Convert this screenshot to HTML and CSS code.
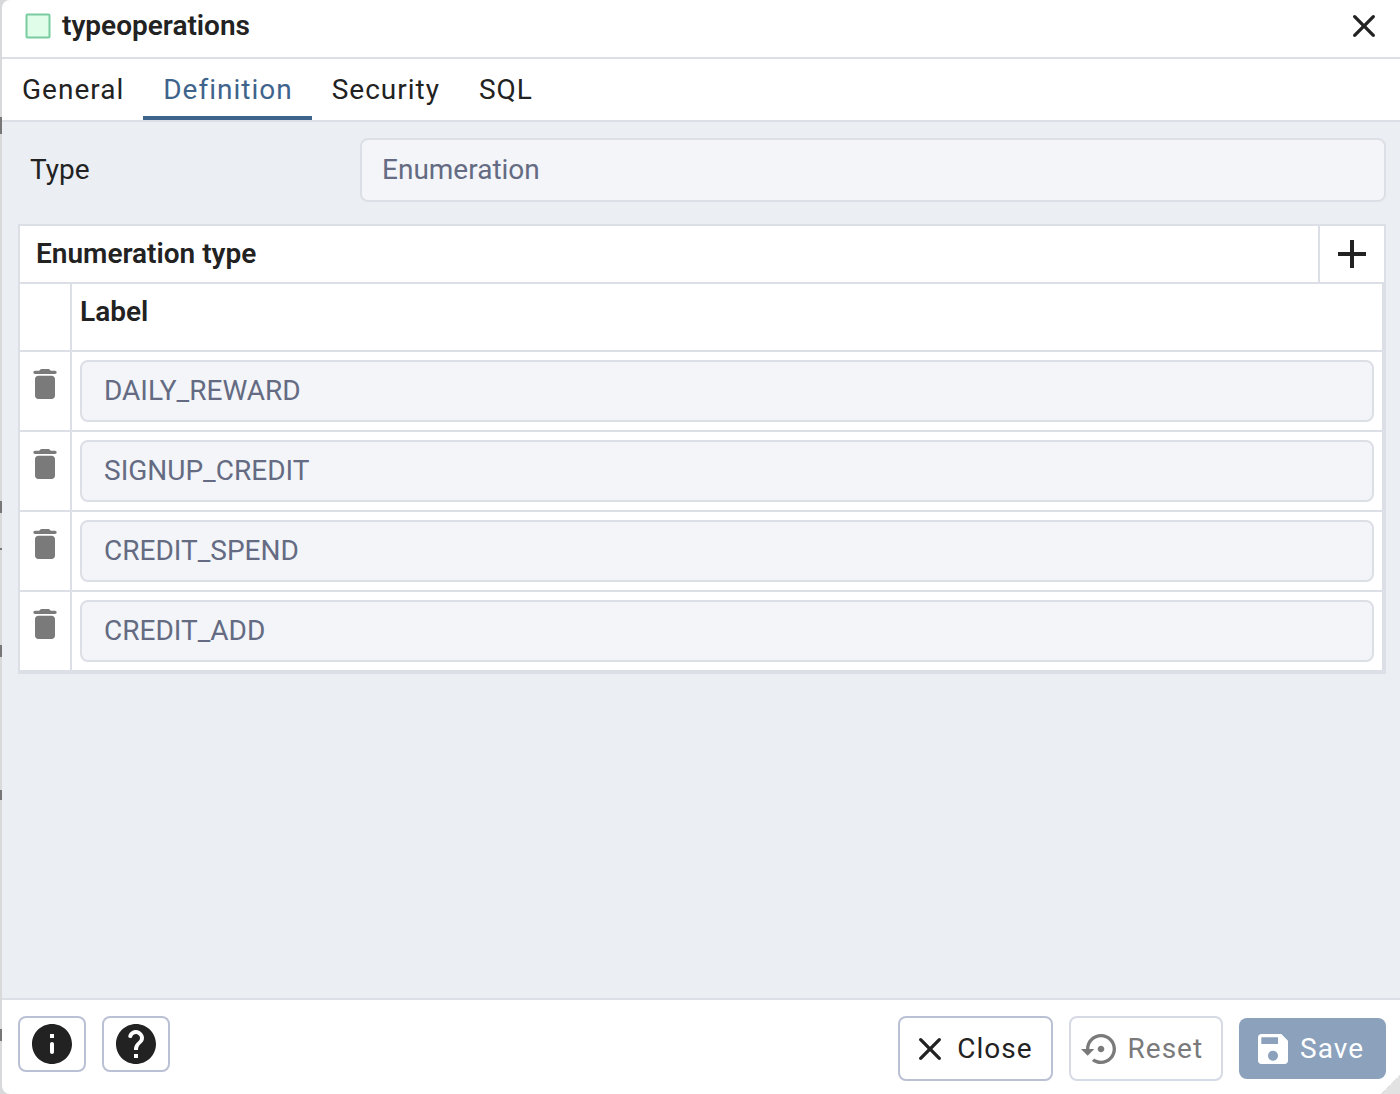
FILE: index.html
```html
<!DOCTYPE html>
<html lang="en">
<head>
<meta charset="utf-8">
<meta name="viewport" content="width=device-width, initial-scale=1">
<title>typeoperations</title>
<link rel="stylesheet" href="styles.css">
</head>
<body>
<svg class="sprite" aria-hidden="true">
  <symbol id="close" viewBox="0 0 24 24"><path d="M18.3 5.71a.9959.9959 0 0 0-1.41 0L12 10.59 7.11 5.7a.9959.9959 0 0 0-1.41 0c-.39.39-.39 1.02 0 1.41L10.59 12 5.7 16.89c-.39.39-.39 1.02 0 1.41.39.39 1.02.39 1.41 0L12 13.41l4.89 4.89c.39.39 1.02.39 1.41 0 .39-.39.39-1.02 0-1.41L13.41 12l4.89-4.89c.38-.38.38-1.02 0-1.4z"/></symbol>
  <symbol id="trash" viewBox="0 0 24 24"><path d="M6 19c0 1.1.9 2 2 2h8c1.1 0 2-.9 2-2V9c0-1.1-.9-2-2-2H8c-1.1 0-2 .9-2 2v10zM18 4h-2.5l-.71-.71c-.18-.18-.44-.29-.7-.29H9.91c-.26 0-.52.11-.7.29L8.5 4H6c-.55 0-1 .45-1 1s.45 1 1 1h12c.55 0 1-.45 1-1s-.45-1-1-1z"/></symbol>
</svg>
<main class="dialog">
  <header class="title-bar">
    <svg class="type-icon" viewBox="0 0 26 26" aria-hidden="true"><rect x="1.5" y="1.5" width="23" height="23" rx="1" fill="#dffde9" stroke="#79cc9f" stroke-width="2"/></svg>
    <h1 class="title">typeoperations</h1>
    <button class="title-close" type="button" aria-label="Close dialog"><svg class="icon"><use href="#close"/></svg></button>
  </header>
  <nav class="tabs" role="tablist">
    <button class="tab" type="button" role="tab" aria-selected="false">General</button>
    <button class="tab tab-active" type="button" role="tab" aria-selected="true">Definition</button>
    <button class="tab" type="button" role="tab" aria-selected="false">Security</button>
    <button class="tab" type="button" role="tab" aria-selected="false">SQL</button>
  </nav>
  <section class="content">
    <div class="field">
      <label class="field-label" for="type">Type</label>
      <input class="input type-input" id="type" value="Enumeration" disabled>
    </div>
    <div class="grid">
      <div class="grid-head">
        <h2 class="grid-title">Enumeration type</h2>
        <button class="add" type="button" aria-label="Add row"><svg class="icon icon-large" viewBox="0 0 24 24"><path d="M19 13h-6v6h-2v-6H5v-2h6V5h2v6h6v2z"/></svg></button>
      </div>
      <table class="table">
        <thead>
          <tr><td class="cell-action"></td><th class="cell-head" scope="col">Label</th></tr>
        </thead>
        <tbody>
          <tr><td class="cell-action"><button class="delete" type="button" aria-label="Delete row" disabled><svg class="icon"><use href="#trash"/></svg></button></td><td class="cell"><input class="input" aria-label="Label" value="DAILY_REWARD" disabled></td></tr>
          <tr><td class="cell-action"><button class="delete" type="button" aria-label="Delete row" disabled><svg class="icon"><use href="#trash"/></svg></button></td><td class="cell"><input class="input" aria-label="Label" value="SIGNUP_CREDIT" disabled></td></tr>
          <tr><td class="cell-action"><button class="delete" type="button" aria-label="Delete row" disabled><svg class="icon"><use href="#trash"/></svg></button></td><td class="cell"><input class="input" aria-label="Label" value="CREDIT_SPEND" disabled></td></tr>
          <tr><td class="cell-action"><button class="delete" type="button" aria-label="Delete row" disabled><svg class="icon"><use href="#trash"/></svg></button></td><td class="cell"><input class="input" aria-label="Label" value="CREDIT_ADD" disabled></td></tr>
        </tbody>
      </table>
    </div>
  </section>
  <footer class="footer">
    <div class="group">
      <button class="button button-icon" type="button" aria-label="Information"><svg class="icon icon-large" viewBox="0 0 24 24"><path d="M12 2C6.48 2 2 6.48 2 12s4.48 10 10 10 10-4.48 10-10S17.52 2 12 2zm0 15c-.55 0-1-.45-1-1v-4c0-.55.45-1 1-1s1 .45 1 1v4c0 .55-.45 1-1 1zm1-8h-2V7h2v2z"/></svg></button>
      <button class="button button-icon" type="button" aria-label="Help"><svg class="icon icon-large" viewBox="0 0 24 24"><path d="M12 2C6.48 2 2 6.48 2 12s4.48 10 10 10 10-4.48 10-10S17.52 2 12 2zm1 17h-2v-2h2v2zm2.07-7.75l-.9.92c-.5.51-.86.97-1.04 1.69-.08.32-.13.68-.13 1.14h-2v-.5c0-.46.08-.9.22-1.31.2-.58.53-1.1.95-1.52l1.24-1.26c.46-.44.68-1.1.55-1.8-.13-.72-.69-1.33-1.39-1.53-1.11-.31-2.14.32-2.47 1.27-.12.37-.43.65-.82.65h-.3C8.4 9 8 8.44 8.16 7.88c.43-1.47 1.68-2.59 3.23-2.83 1.52-.24 2.97.55 3.87 1.8 1.18 1.63.83 3.38-.19 4.4z"/></svg></button>
    </div>
    <div class="group group-actions">
      <button class="button" type="button"><svg class="icon"><use href="#close"/></svg>Close</button>
      <button class="button button-reset" type="button" disabled><svg class="icon" viewBox="0 0 24 24"><path d="M14 12c0-1.1-.9-2-2-2s-2 .9-2 2 .9 2 2 2 2-.9 2-2zm-2-9c-4.97 0-9 4.03-9 9H0l4 4 4-4H5c0-3.87 3.13-7 7-7s7 3.13 7 7-3.13 7-7 7c-1.51 0-2.91-.49-4.06-1.3l-1.42 1.44C8.04 20.3 9.94 21 12 21c4.97 0 9-4.03 9-9s-4.03-9-9-9z"/></svg>Reset</button>
      <button class="button button-save" type="button" disabled><svg class="icon" viewBox="0 0 24 24"><path d="M17 3H5c-1.11 0-2 .9-2 2v14c0 1.1.89 2 2 2h14c1.1 0 2-.9 2-2V7l-4-4zm-5 16c-1.66 0-3-1.34-3-3s1.34-3 3-3 3 1.34 3 3-1.34 3-3 3zm3-10H5V5h10v4z"/></svg>Save</button>
    </div>
  </footer>
  <span class="resize-grip" aria-hidden="true"></span>
</main>
</body>
</html>
```

FILE: styles.css
```css
:root {
  --line: #dddfe6;
  --text: #222222;
  --muted: #646b82;
  --primary: #3f648c;
}

* {
  box-sizing: border-box;
}

body {
  margin: 0;
  padding-left: 2px;
  /* the sliver of the page behind the dialog, with the edges of its text */
  background:
    linear-gradient(#777, #777) 0 117px / 2px 17px no-repeat,
    linear-gradient(#777, #777) 0 501px / 2px 12px no-repeat,
    linear-gradient(#777, #777) 0 548px / 2px 2px no-repeat,
    linear-gradient(#777, #777) 0 645px / 2px 12px no-repeat,
    linear-gradient(#777, #777) 0 790px / 2px 10px no-repeat,
    linear-gradient(#777, #777) 0 1029px / 2px 12px no-repeat,
    #d8d9db;
  color: var(--text);
  font: 28px/40px Roboto, sans-serif;
}

button,
input {
  margin: 0;
  padding: 0;
  border: 0;
  background: none;
  color: inherit;
  font: inherit;
}

.sprite {
  display: none;
}

.icon {
  display: block;
  flex: none;
  width: 40px;
  height: 40px;
  fill: currentColor;
}

.icon-large {
  width: 48px;
  height: 48px;
}

.dialog {
  position: relative;
  display: flex;
  flex-direction: column;
  min-height: 100vh;
  overflow: hidden;
  border-radius: 8px 0 0 8px;
  background: #fff;
}

.title-bar {
  display: flex;
  align-items: center;
  gap: 11px;
  height: 59px;
  padding: 0 16px 6px 23px;
  border-bottom: 2px solid var(--line);
}

.type-icon {
  width: 26px;
  height: 26px;
}

.title,
.grid-title {
  margin: 0;
  font-size: 28px;
  font-weight: 600;
}

.title-close {
  margin-left: auto;
}

.tabs {
  display: flex;
  height: 63px;
  border-bottom: 2px solid var(--line);
}

.tab {
  padding: 4px 19px 0 20px;
  border-bottom: 4px solid transparent;
  letter-spacing: 1px;
}

.tab-active {
  border-color: var(--primary);
  color: var(--primary);
}

.content {
  flex: 1;
  padding: 16px 14px 16px 16px;
  background: #ebeef3;
}

.field {
  display: grid;
  grid-template-columns: 1fr 3fr;
  align-items: center;
  margin-bottom: 22px;
}

.field-label {
  padding-left: 12px;
}

.input {
  display: block;
  width: 100%;
  height: 62px;
  padding: 0 22px 2px;
  border: 2px solid var(--line);
  border-radius: 8px;
  background: #f3f5f9;
  color: var(--muted);
}

.type-input {
  height: 64px;
  padding: 0 20px 2px;
}

.grid {
  border: 2px solid var(--line);
  background: #fff;
}

.grid-head {
  display: flex;
  height: 58px;
  border-bottom: 2px solid var(--line);
}

.grid-title {
  flex: 1;
  padding: 8px 16px;
}

.add {
  display: grid;
  place-items: center;
  width: 66px;
  border-left: 2px solid var(--line);
}

.table {
  width: 100%;
  border-spacing: 0;
  table-layout: fixed;
}

.cell-action,
.cell-head,
.cell {
  padding: 8px;
  border-right: 2px solid var(--line);
  border-bottom: 2px solid var(--line);
  vertical-align: top;
}

.cell-action {
  width: 52px;
  padding: 12px 5px;
}

.cell-head {
  height: 68px;
  font-weight: 600;
  text-align: left;
}

.delete {
  display: block;
  color: #7a7a7a;
}

.footer {
  display: flex;
  flex-wrap: wrap;
  justify-content: space-between;
  gap: 16px;
  padding: 16px 14px 13px 16px;
  border-top: 2px solid var(--line);
}

.group {
  display: flex;
  align-items: flex-start;
  gap: 16px;
}

.group-actions {
  align-items: center;
}

.button {
  display: flex;
  align-items: center;
  gap: 7px;
  height: 65px;
  padding: 0 18px 0 10px;
  border: 2px solid #bac1d5;
  border-radius: 8px;
  letter-spacing: 1px;
}

.button-icon {
  height: 56px;
  padding: 0 8px;
}

.button-reset {
  border-color: #d6dae4;
  color: #7a7a7a;
}

.button-save {
  height: 61px;
  padding: 0 22px 0 14px;
  border: 0;
  background: #8ba1bc;
  color: #fff;
}

.resize-grip {
  position: absolute;
  right: 0;
  bottom: 0;
  width: 19px;
  height: 19px;
  background: linear-gradient(135deg, transparent 50%, #e2e2e2 50%);
}
```
